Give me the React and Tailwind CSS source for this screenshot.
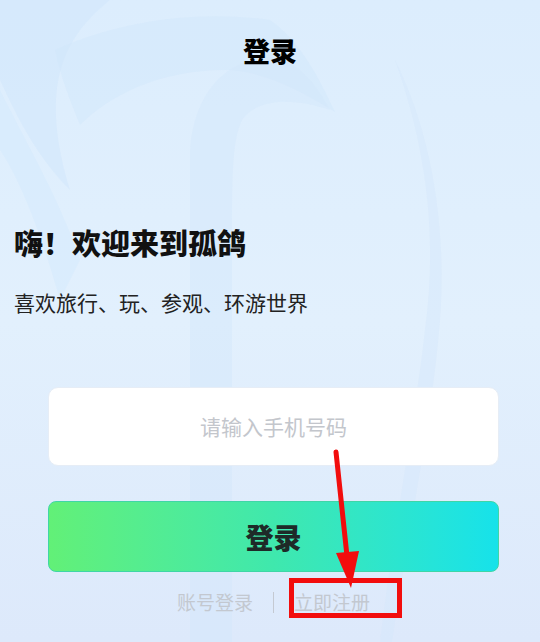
import React from 'react';

const Backdrop = () => (
  <svg
    className="absolute inset-0 w-full h-full pointer-events-none"
    viewBox="0 0 540 642"
    preserveAspectRatio="none"
  >
    <path d="M0 0 L110 0 C60 40 40 90 70 190 C30 150 10 100 0 80 Z" fill="#cfe5fb" opacity="0.5" />
    <path d="M0 90 C30 150 60 200 80 260 L60 300 C40 230 20 180 0 150 Z" fill="#d3e8fc" opacity="0.45" />
    <path d="M55 50 C120 20 200 10 270 20 C300 40 320 80 335 112 C300 90 260 70 225 70 C160 70 110 95 80 125 C70 100 60 75 55 50 Z" fill="#d0e6fb" opacity="0.45" />
    <path d="M190 642 L190 150 C195 80 240 55 275 58 C300 62 320 90 330 110 C300 100 260 95 242 120 C232 140 232 180 232 240 L232 642 Z" fill="#d2e7fb" opacity="0.45" />
    <path d="M395 60 C420 130 440 220 425 330 C415 420 395 520 380 642 L392 642 C410 520 432 420 440 320 C448 210 425 120 395 60 Z" fill="#d5e8fb" opacity="0.5" />
  </svg>
);

const Annotation = () => (
  <>
    <svg className="absolute left-0 top-0 w-[540px] h-[642px] pointer-events-none" viewBox="0 0 540 642">
      <line x1="336" y1="452" x2="347" y2="556" stroke="#f20d0d" strokeWidth="5" strokeLinecap="round" />
      <polygon points="336,553 359,551 351,588" fill="#f20d0d" />
    </svg>
    <div className="absolute left-[289px] top-[578px] w-[113px] h-[40px] border-[5px] border-[#f20d0d] pointer-events-none" />
  </>
);

export default function App() {
  return (
    <div
      className="relative w-[540px] h-[642px] overflow-hidden bg-gradient-to-b from-[#dcedfd] via-[#e2f0fd] to-[#dde9fb]"
      style={{ fontFamily: '"Noto Sans CJK SC", "Noto Sans", sans-serif' }}
    >
      <Backdrop />

      <div className="relative flex flex-col">
        <div className="h-[100px] flex items-center justify-center">
          <h1 className="text-[27px] font-black text-black leading-none">登录</h1>
        </div>

        <div className="px-[14px] mt-[122px]">
          <h2 className="text-[29px] font-black text-[#111] leading-[40px]">嗨！欢迎来到孤鸽</h2>
          <p className="mt-[25px] text-[21px] text-[#222] leading-[30px]">喜欢旅行、玩、参观、环游世界</p>
        </div>

        <div className="ml-[48px] w-[451px] mt-[70px] flex flex-col">
          <div className="h-[79px] rounded-[10px] bg-white border border-[#e6edf6] flex items-center justify-center">
            <span className="text-[21px] text-[#c3c6cc]">请输入手机号码</span>
          </div>

          <button className="mt-[35px] h-[71px] rounded-[8px] border border-[#3fd6a6] bg-gradient-to-r from-[#62f077] via-[#3fe8ad] to-[#16e2ea] flex items-center justify-center">
            <span className="text-[28px] font-black text-[#1e2a28]">登录</span>
          </button>

          <div className="mt-[17px] h-[26px] flex items-center justify-center text-[19px] text-[#c3c8d0]">
            <span>账号登录</span>
            <span className="mx-[20px] w-px h-[21px] bg-[#c4c9d2]" />
            <span>立即注册</span>
          </div>
        </div>
      </div>

      <Annotation />
    </div>
  );
}
